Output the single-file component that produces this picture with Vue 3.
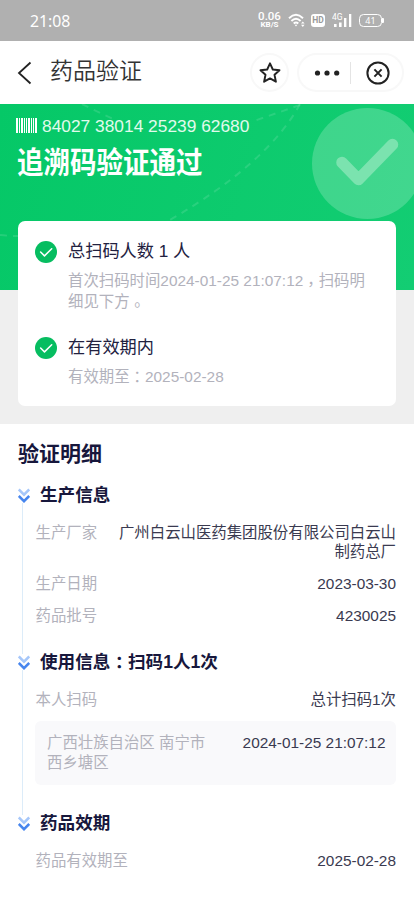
<script setup>
const bars = [[0, 2], [3, 1], [5, 2], [8, 1], [10, 1], [12, 2], [15, 1], [17, 1], [19, 2]]
const production = [
  { label: '生产厂家', value: '广州白云山医药集团股份有限公司白云山制药总厂' },
  { label: '生产日期', value: '2023-03-30' },
  { label: '药品批号', value: '4230025' },
]
</script>

<template>
  <div class="page">
    <div class="status">
      <span class="clock">21:08</span>
      <div class="indicators">
        <div class="speed"><b>0.06</b><span>KB/S</span></div>
        <svg class="wifi" width="18" height="15" viewBox="0 0 18 15" fill="none" stroke="#fff" stroke-width="1.9">
          <path d="M1 5.200Q8 -1.600 15 5.200M3.400 8Q8 3.600 12.600 8M5.700 10.500Q8 8.500 10.300 10.500" />
          <path d="M6.600 11.800h2.800L8 13.500z" fill="#fff" stroke="none" />
          <path d="M13 10.600l1.800-2.200 1.800 2.200zM13 11.800l1.800 2.200 1.800-2.200z" fill="#fff" stroke="none" />
        </svg>
        <span class="hd">HD</span>
        <svg class="signal" width="20" height="15" viewBox="0 0 20 15">
          <text x="0" y="7" font-size="8.500" fill="#fff">4G</text>
          <path d="M2 11h2.600v3H2zM7 9.500h2.600V14H7zM12 5h2.400v9H12zM17 1h2.300v13H17z" fill="#fff" />
        </svg>
        <div class="battery"><span>41</span></div>
      </div>
    </div>

    <header class="nav">
      <svg class="back" width="16" height="24" viewBox="0 0 16 24" fill="none" stroke="#222" stroke-width="1.800">
        <path d="M13.500 1.500L2 12l11.500 10.500" />
      </svg>
      <h1>药品验证</h1>
      <div class="star">
        <svg width="24" height="24" viewBox="0 0 24 24" fill="none" stroke="#222" stroke-width="1.900" stroke-linejoin="round">
          <path d="M12 2.300l2.800 6.200 6.700.7-5 4.500 1.400 7L12 17.400 6.100 20.700l1.400-7-5-4.500 6.700-.7z" />
        </svg>
      </div>
      <div class="capsule">
        <svg width="26" height="8" viewBox="0 0 26 8" fill="#222">
          <circle cx="3.500" cy="4" r="2.600" /><circle cx="13" cy="4" r="2.600" /><circle cx="22.700" cy="4" r="2.600" />
        </svg>
        <i></i>
        <svg width="24" height="24" viewBox="0 0 24 24" fill="none" stroke="#222" stroke-width="2">
          <circle cx="12" cy="12" r="10.600" /><path d="M8.400 8.400l7.200 7.200M15.600 8.400l-7.200 7.200" />
        </svg>
      </div>
    </header>

    <section class="hero">
      <svg class="art" width="414" height="186" viewBox="0 0 414 186" fill="none">
        <g stroke="#fff" stroke-opacity=".12" stroke-width="2" stroke-dasharray="7 6">
          <path d="M82 0Q102 10 122 19" />
          <path d="M300 0Q269 58 170 116" />
          <path d="M300 1L254 17" />
          <path d="M0 131Q9 132 18 132" />
        </g>
        <circle cx="367.500" cy="59.500" r="55.500" fill="#fff" fill-opacity=".2" />
        <path d="M342 58.500L358.500 75.500 392.500 40.500" stroke="#7be3af" stroke-width="11.500" stroke-linecap="round" stroke-linejoin="round" />
      </svg>
      <div class="code">
        <svg width="21" height="15" viewBox="0 0 21 15" fill="#fff">
          <rect v-for="b in bars" :key="b[0]" :x="b[0]" y="0" :width="b[1]" height="15" />
        </svg>
        <span>84027 38014 25239 62680</span>
      </div>
      <h2>追溯码验证通过</h2>
      <div class="card">
        <div class="check">
          <svg width="22" height="22" viewBox="0 0 22 22" fill="none">
            <circle cx="11" cy="11" r="11" fill="#06bd60" />
            <path d="M5.600 11l3.900 3.900 7.200-7.200" stroke="#fff" stroke-width="1.500" stroke-linecap="round" stroke-linejoin="round" />
          </svg>
          <div>
            <h3>总扫码人数 1 人</h3>
            <p>首次扫码时间2024-01-25 21:07:12<span class="punct low">，</span>扫码明</p>
            <p class="wrap">细见下方<span class="punct low">。</span></p>
          </div>
        </div>
        <div class="check">
          <svg width="22" height="22" viewBox="0 0 22 22" fill="none">
            <circle cx="11" cy="11" r="11" fill="#06bd60" />
            <path d="M5.600 11l3.900 3.900 7.200-7.200" stroke="#fff" stroke-width="1.500" stroke-linecap="round" stroke-linejoin="round" />
          </svg>
          <div>
            <h3>在有效期内</h3>
            <p>有效期至<span class="punct">：</span>2025-02-28</p>
          </div>
        </div>
      </div>
    </section>

    <main class="details">
      <h2>验证明细</h2>
      <section class="step production">
        <div class="rail">
          <svg width="12" height="16" viewBox="0 0 12 16" fill="none" stroke-width="2.500">
            <path d="M.8 1.500L6 6.700l5.200-5.200" stroke="#a6c7fa" /><path d="M.8 8L6 13.200 11.200 8" stroke="#4685ee" />
          </svg>
        </div>
        <div class="body">
          <h3>生产信息</h3>
          <div v-for="row in production" :key="row.label" class="row">
            <span class="label">{{ row.label }}</span><span class="value">{{ row.value }}</span>
          </div>
        </div>
      </section>
      <section class="step usage">
        <div class="rail">
          <svg width="12" height="16" viewBox="0 0 12 16" fill="none" stroke-width="2.500">
            <path d="M.8 1.500L6 6.700l5.200-5.200" stroke="#a6c7fa" /><path d="M.8 8L6 13.200 11.200 8" stroke="#4685ee" />
          </svg>
        </div>
        <div class="body">
          <h3>使用信息<span class="punct">：</span>扫码1人1次</h3>
          <div class="row"><span class="label">本人扫码</span><span class="value">总计扫码1次</span></div>
          <div class="record"><span>广西壮族自治区 南宁市西乡塘区</span><time>2024-01-25 21:07:12</time></div>
        </div>
      </section>
      <section class="step last">
        <div class="rail">
          <svg width="12" height="16" viewBox="0 0 12 16" fill="none" stroke-width="2.500">
            <path d="M.8 1.500L6 6.700l5.200-5.200" stroke="#a6c7fa" /><path d="M.8 8L6 13.200 11.200 8" stroke="#4685ee" />
          </svg>
        </div>
        <div class="body">
          <h3>药品效期</h3>
          <div class="row"><span class="label">药品有效期至</span><span class="value">2025-02-28</span></div>
        </div>
      </section>
    </main>
  </div>
</template>

<style>
body { background: #fff; }
</style>

<style scoped>
* { box-sizing: border-box; margin: 0; padding: 0; }
.page { width: 414px; height: 897px; overflow: hidden; background: #fff; font-family: "Liberation Sans", "Noto Sans CJK SC", sans-serif; font-size: 15.4px; color: #3a3a50; }
svg { display: block; flex: none; }
.status { height: 41px; background: #b0b0b0; color: #fff; display: flex; justify-content: space-between; align-items: center; padding: 0 30px; }
.clock { font: 15.800px/20px "Noto Sans", sans-serif; }
.indicators { display: flex; align-items: center; }
.speed { display: flex; flex-direction: column; align-items: center; width: 23px; font: bold 8px/8px Roboto, sans-serif; margin-right: 7px; }
.speed b { font-size: 11.500px; line-height: 9px; font-weight: 500; }
.wifi { margin-right: 5px; }
.hd { width: 14px; height: 13px; border-radius: 3px; background: #fff; color: #999; font: bold 8.500px/13px Roboto, sans-serif; text-align: center; margin-right: 7px; }
.signal { font-family: Roboto, sans-serif; margin-right: 7px; }
.battery { width: 23px; height: 13px; border: 1.500px solid #fff; border-radius: 4.500px; font: 9px/11px "Noto Sans", sans-serif; text-align: center; margin-right: 2px; position: relative; }
.battery::after { content: ""; position: absolute; right: -3px; top: 3px; width: 2px; height: 5px; background: #fff; border-radius: 0 1px 1px 0; }
.nav { height: 63px; display: flex; align-items: center; padding: 0 10px 0 17px; color: #222; }
.nav h1 { font: 350 23px/34px "Noto Sans CJK SC", sans-serif; margin: -7px auto 0 17px; color: #333; }
.star { width: 39px; height: 39px; border: 2px solid #f8f8f8; border-radius: 50%; display: grid; place-items: center; margin-right: 8px; }
.capsule { width: 107px; height: 39px; border: 2px solid #f8f8f8; border-radius: 20px; display: flex; align-items: center; padding-left: 15px; }
.capsule i { width: 1px; height: 22px; background: #e4e4e4; margin: 0 15px 0 10px; }
.hero { position: relative; height: 320px; padding: 12px 18px 0; background: linear-gradient(105deg, #05c867, #13cd73) top / 100% 186px no-repeat #efefef; }
.art { position: absolute; left: 0; top: 0; }
.code { position: relative; display: flex; align-items: center; gap: 5px; height: 20px; margin-left: -2px; color: #e1fbed; font-size: 17.350px; line-height: 20px; }
.code svg { margin-top: -1px; }
.code span { margin-top: -1px; }
.hero h2 { position: relative; height: 40px; margin: 5px 0 40px -1px; color: #fff; font: bold 26.500px/40px "Noto Sans CJK SC", sans-serif; transform: scaleY(1.12); white-space: nowrap; }
.card { position: relative; height: 185px; background: #fff; border-radius: 7px; padding: 18px 17px; }
.check { display: flex; gap: 11px; }
.check svg { margin-top: 1.500px; }
.check h3 { font-size: 17.200px; line-height: 24px; font-weight: 400; color: #22213f; }
.check p { width: 300px; height: 20.500px; margin-top: 8px; line-height: 20.500px; color: #b2b2bc; white-space: nowrap; }
.check p.wrap { margin-top: 0; }
.check + .check { margin-top: 23px; }
.punct { font-family: "Noto Sans CJK TC", sans-serif; line-height: 1; vertical-align: -1px; }
.low { vertical-align: -4px; }
.details { padding: 15px 18px 0; }
.details h2 { font-size: 21px; line-height: 30px; color: #17173c; }
.step { display: flex; gap: 10px; }
.rail { width: 12px; display: flex; flex-direction: column; padding-top: 8px; }
.rail::after { content: ""; width: 1px; flex: 1; margin: -1px 0 -7px 4px; background: #dcecf9; }
.last .rail::after { display: none; }
.body { flex: 1; min-width: 0; }
.body h3 { height: 24px; margin-top: 3px; font-size: 17.600px; line-height: 24px; color: #17173c; }
.production { height: 167px; margin-top: 11px; }
.usage { height: 161px; }
.row { display: flex; justify-content: space-between; margin: 13px 0 0 -4.500px; line-height: 19px; }
.production .row:nth-of-type(1) { margin-top: 16px; }
.label { color: #b2b2bc; white-space: nowrap; }
.value { max-width: 282px; text-align: right; }
.usage .row, .last .row { margin-top: 16px; }
.record { display: flex; justify-content: space-between; margin: 12px 0 0 -5px; height: 64px; padding: 12px 10.500px 8px 12px; background: #f9f9fb; border-radius: 6px; line-height: 19.500px; color: #b2b2bc; }
.record span { width: 165px; }
.record time { color: #3a3a50; white-space: nowrap; }
</style>
